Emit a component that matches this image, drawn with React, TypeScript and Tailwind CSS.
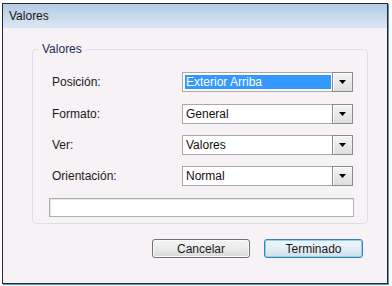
import React from 'react';

const rows = [
  { label: 'Posición:', value: 'Exterior Arriba', selected: true },
  { label: 'Formato:', value: 'General', selected: false },
  { label: 'Ver:', value: 'Valores', selected: false },
  { label: 'Orientación:', value: 'Normal', selected: false },
];

function ComboBox({ value, selected }: { value: string; selected: boolean }) {
  return (
    <div className="flex h-[20px] w-[171px] items-stretch border border-[#a9a9a9] bg-white">
      <div className="flex flex-1 items-center p-[2px]">
        <div
          className={
            selected
              ? 'flex h-full w-full items-center bg-[#3399ff] pl-[1px] text-white'
              : 'flex h-full w-full items-center pl-[1px] text-[#111]'
          }
        >
          {value}
        </div>
      </div>
      {/* dropdown arrow button */}
      <div className="m-[-1px] flex w-[21px] items-center justify-center border border-[#8a8a8a] bg-gradient-to-b from-[#f4f4f4] to-[#dedede] shadow-[inset_1px_1px_0_#ffffff]">
        <svg width="7" height="4" viewBox="0 0 7 4">
          <path d="M0 0h7L3.5 4z" fill="#000" />
        </svg>
      </div>
    </div>
  );
}

export default function App() {
  return (
    <div className="h-[286px] w-[392px] bg-white pl-[2px] pt-[3px] font-['Liberation_Sans',Arial,sans-serif] text-[12px] leading-[14px]">
      <div className="flex h-[281px] w-[386px] flex-col border border-[#262a30] shadow-[1px_1px_0_#4a9ab8]">
        {/* Title bar */}
        <div className="flex h-[24px] items-center bg-gradient-to-b from-[#b4cbe6] to-[#dde7f3] pl-[6px] text-[#151515]">
          Valores
        </div>

        {/* Body */}
        <div className="flex flex-1 flex-col bg-[#f6f2f6] pl-[29px] pt-[14px]">
          <fieldset className="w-[336px] rounded-[4px] border border-[#dcdfe6] pb-[6px] pl-[16px] pr-[13px]">
            <legend className="-ml-[11px] px-[4px] text-[#1d2a55]">Valores</legend>
            <div className="flex flex-col gap-[11px] pt-[16px]">
              {rows.map((r, i) => (
                <div key={r.label} className={i === 0 ? 'mb-[1px] flex items-center pl-[3px]' : 'flex items-center pl-[3px]'}>
                  <span className="w-[130px] text-[#1a1a1a]">{r.label}</span>
                  <ComboBox value={r.value} selected={r.selected} />
                </div>
              ))}
            </div>
            <div className="mt-[12px] h-[19px] w-[305px] border border-[#b0b0b0] bg-white shadow-[inset_1px_1px_0_#e4e4e4]" />
          </fieldset>

          {/* Buttons */}
          <div className="flex gap-[14px] pl-[120px] pt-[15px]">
            <button className="h-[19px] w-[98px] rounded-[3px] border border-[#707070] bg-gradient-to-b from-[#f3f3f3] via-[#ebebeb] to-[#d8d8d8] text-[#1a1a1a] shadow-[inset_0_0_0_1px_#fcfcfc]">
              Cancelar
            </button>
            <button className="h-[19px] w-[99px] rounded-[3px] border border-[#3c7fb1] bg-gradient-to-b from-[#eef6fb] via-[#e3eef6] to-[#cfe0ec] text-[#1a1a1a] shadow-[inset_0_0_0_1px_#90d2f6]">
              Terminado
            </button>
          </div>
        </div>
      </div>
    </div>
  );
}
